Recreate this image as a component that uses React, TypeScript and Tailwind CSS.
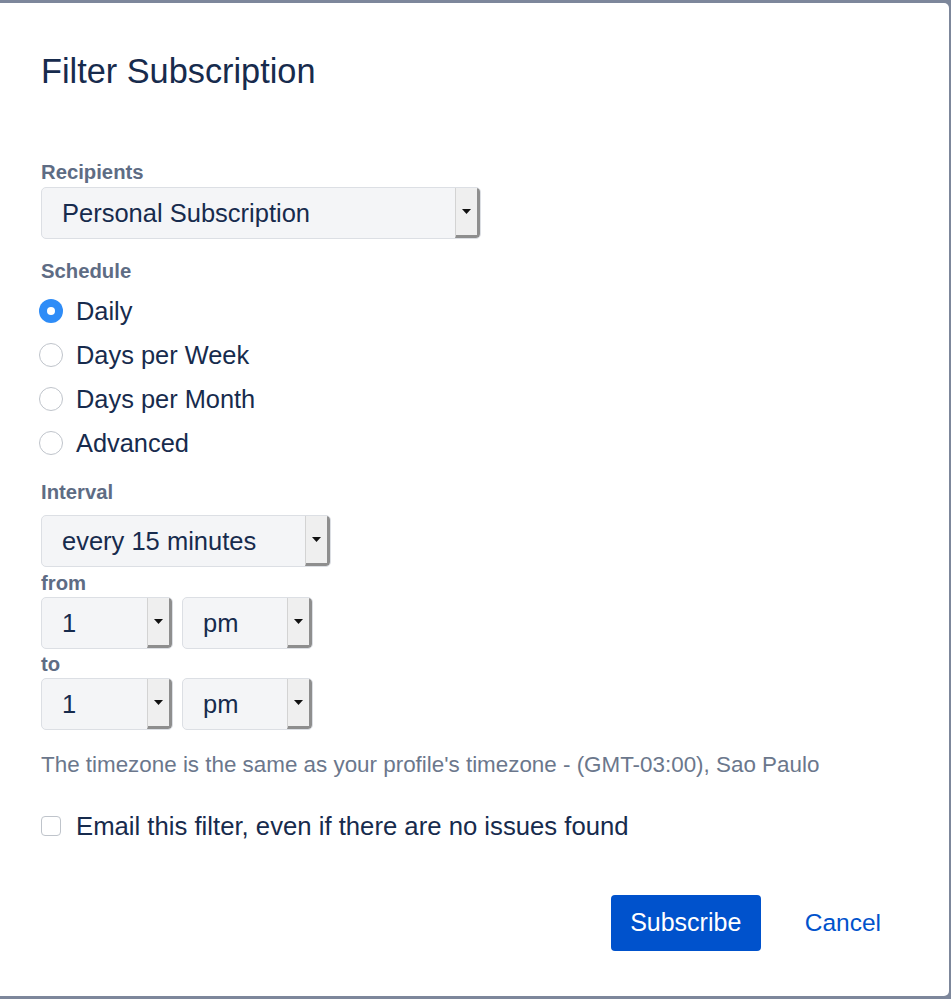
import React from "react";

const font = { fontFamily: '"Liberation Sans", Arial, sans-serif' };

function Arrow() {
  return (
    <div className="w-[25px] self-stretch flex items-center justify-center bg-[#efefef] border-l border-l-[#d3d3d3] border-r-[3px] border-r-[#8e8e8e] border-b-[3px] border-b-[#8e8e8e] rounded-tr-[3px] rounded-br-[4px]">
      <svg width="9" height="5" viewBox="0 0 9 5">
        <path d="M0 0H9L4.5 5Z" fill="#111" />
      </svg>
    </div>
  );
}

function Select({ value, width }: { value: string; width: string }) {
  return (
    <div
      className={`${width} h-[52px] flex items-stretch bg-[#f4f5f7] border border-[#dcdfe4] rounded-[5px] overflow-hidden`}
    >
      <div className="flex-1 flex items-center pl-[20px] text-[25.5px] text-[#172b4d]">{value}</div>
      <Arrow />
    </div>
  );
}

function Label({ children, className = "" }: { children: React.ReactNode; className?: string }) {
  return (
    <div className={`h-[24px] leading-[24px] text-[20.3px] font-bold text-[#5e6c84] ${className}`}>{children}</div>
  );
}

function Radio({ label, checked }: { label: string; checked?: boolean }) {
  return (
    <div className="h-[44px] flex items-center">
      {checked ? (
        <div className="ml-[-2px] w-[24px] h-[24px] rounded-full bg-[#2e8cf7] flex items-center justify-center">
          <div className="w-[8px] h-[8px] rounded-full bg-white" />
        </div>
      ) : (
        <div className="ml-[-2px] w-[24px] h-[24px] rounded-full bg-white border border-[#bfc4cb]" />
      )}
      <span className="ml-[13px] text-[25.4px] text-[#172b4d]">{label}</span>
    </div>
  );
}

export default function App() {
  return (
    <div className="w-[951px] h-[999px] bg-[#7d879b] pt-[3px] pb-[3px] pr-[2px]" style={font}>
      <div className="h-full bg-white rounded-r-[5px] pl-[41px] pt-[48px]">
        <h1 className="h-[40px] leading-[40px] text-[34.3px] text-[#172b4d]">Filter Subscription</h1>

        <Label className="mt-[69px]">Recipients</Label>
        <div className="mt-[3px]">
          <Select value="Personal Subscription" width="w-[440px]" />
        </div>

        <Label className="mt-[20px]">Schedule</Label>
        <div className="mt-[6px]">
          <Radio label="Daily" checked />
          <Radio label="Days per Week" />
          <Radio label="Days per Month" />
          <Radio label="Advanced" />
        </div>

        <Label className="mt-[15px]">Interval</Label>
        <div className="mt-[11px]">
          <Select value="every 15 minutes" width="w-[290px]" />
        </div>
        <Label className="mt-[4px]">from</Label>
        <div className="mt-[2px] flex gap-[9px]">
          <Select value="1" width="w-[132px]" />
          <Select value="pm" width="w-[131px]" />
        </div>
        <Label className="mt-[3px]">to</Label>
        <div className="mt-[2px] flex gap-[9px]">
          <Select value="1" width="w-[132px]" />
          <Select value="pm" width="w-[131px]" />
        </div>

        <div className="mt-[23px] h-[24px] leading-[24px] text-[22.4px] text-[#6b778c]">
          The timezone is the same as your profile's timezone - (GMT-03:00), Sao Paulo
        </div>

        <div className="mt-[37px] h-[24px] flex items-center">
          <div className="w-[20px] h-[20px] rounded-[4px] border border-[#bfc4cb] bg-white" />
          <span className="ml-[15px] text-[25.7px] text-[#172b4d]">Email this filter, even if there are no issues found</span>
        </div>

        <div className="mt-[57px] flex justify-end items-center pr-[68px]">
          <button className="w-[150px] h-[56px] rounded-[4px] bg-[#0052cc] text-white text-[25px] font-medium">
            Subscribe
          </button>
          <button className="ml-[44px] text-[24.5px] text-[#0052cc]">Cancel</button>
        </div>
      </div>
    </div>
  );
}
